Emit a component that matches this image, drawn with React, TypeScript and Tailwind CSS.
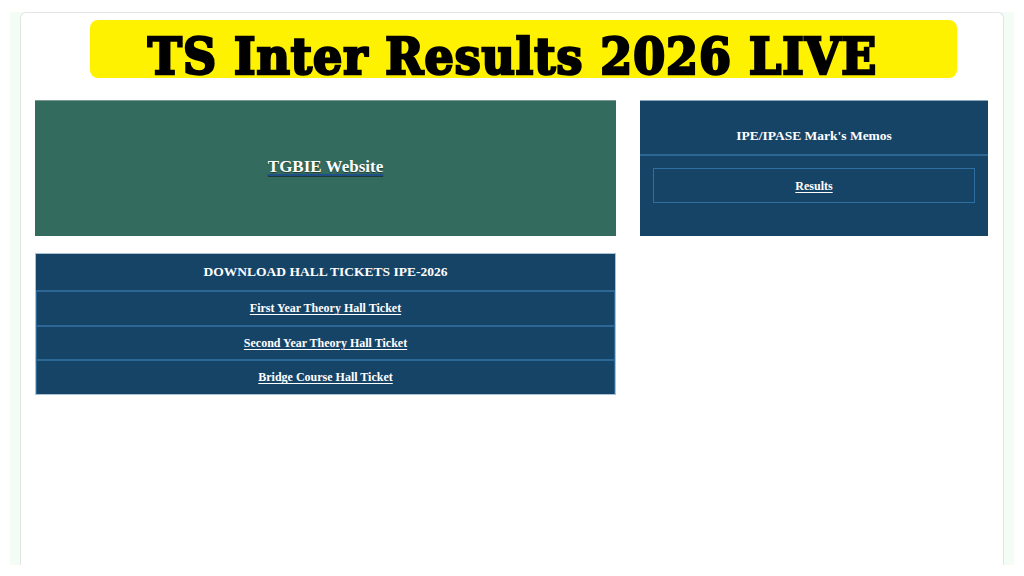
const tickets = [
  'First Year Theory Hall Ticket',
  'Second Year Theory Hall Ticket',
  'Bridge Course Hall Ticket',
];

export default function App() {
  return (
    <div className="min-h-screen bg-white pt-3 font-['Liberation_Serif',serif]">
      {/* faint mint strip hugging the card edges */}
      <div className="mx-[10px] h-[553px] bg-[#f3fdf6] px-[10px]">
        <div className="h-full rounded-t-md border border-b-0 border-[#e2e5e3] bg-white px-[14px]">
          <div className="ml-[55px] mt-[7px] flex h-[58px] w-[867px] items-end justify-center rounded-lg bg-[#fff200] pr-[22px]">
            <h1 className="font-['DejaVu_Serif_Condensed','DejaVu_Serif',serif] text-[51px] font-bold leading-[43px] tracking-[1px] text-black [-webkit-text-stroke:2.5px_black]">
              TS Inter Results 2026 LIVE
            </h1>
          </div>

          <div className="mt-[22px] grid grid-cols-[581px_348px] gap-6">
            <div className="flex flex-col gap-[17px]">
              <a
                href="#"
                className="flex h-[136px] items-center justify-center border-t border-[#7a9890] bg-[#346b5f] pb-[4px]"
              >
                <span className="text-[17px] font-bold text-white underline decoration-[#1f4f86] decoration-2 underline-offset-2 [text-shadow:0_1px_1px_rgba(0,0,0,0.45)]">
                  TGBIE Website
                </span>
              </a>

              <div className="border border-[#a9c3d6] bg-[#164467]">
                <div className="flex h-[36px] items-center justify-center text-[13.5px] font-bold text-white">
                  DOWNLOAD HALL TICKETS IPE-2026
                </div>
                {tickets.map((t) => (
                  <a
                    key={t}
                    href="#"
                    className="flex h-[34.5px] items-center justify-center border-x border-t-2 border-[#2c6796] text-[12px] font-bold text-white underline underline-offset-2"
                  >
                    {t}
                  </a>
                ))}
              </div>
            </div>

            <div className="h-[136px] border-t border-[#8aa7bd] bg-[#164467]">
              <div className="flex h-[53px] items-end justify-center pb-[8px] text-[13.5px] font-bold text-white">
                IPE/IPASE Mark&apos;s Memos
              </div>
              <div className="border-t-2 border-[#2c6796] px-[13px] pt-[12px]">
                <a
                  href="#"
                  className="flex h-[35px] items-center justify-center border border-[#2f6ea0] text-[12px] font-bold text-white underline underline-offset-2"
                >
                  Results
                </a>
              </div>
            </div>
          </div>
        </div>
      </div>
    </div>
  );
}
